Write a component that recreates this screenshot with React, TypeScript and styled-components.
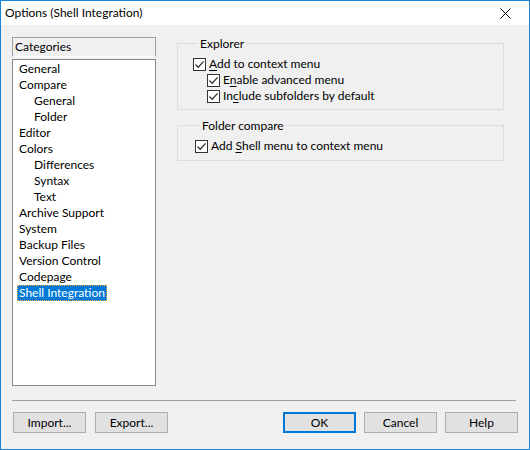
import React from "react";
import styled, { createGlobalStyle, css } from "styled-components";

const FONT = `Lato, "Noto Sans", sans-serif`;

const Global = createGlobalStyle`
  html, body { margin: 0; padding: 0; background: #ffffff; }
  body { font-family: ${FONT}; font-size: 12px; color: #000; }
  * { box-sizing: border-box; }
`;

const Window = styled.div`
  width: 530px;
  height: 450px;
  border: 1px solid #1883d7;
  display: flex;
  flex-direction: column;
  background: #f0f0f0;
`;

const TitleBar = styled.div`
  height: 24px;
  background: #ffffff;
  display: flex;
  align-items: center;
  justify-content: space-between;
  padding-left: 4px;
  flex: none;
`;

const Title = styled.span`
  font-size: 12px;
  line-height: 16px;
  color: #000;
`;

const CloseBox = styled.div`
  width: 46px;
  height: 24px;
  display: flex;
  align-items: center;
  justify-content: center;
  margin-right: 1px;
`;

const Body = styled.div`
  flex: 1;
  display: flex;
  flex-direction: column;
  padding: 12px 11px 16px 11px;
`;

const Main = styled.div`
  height: 349px;
  display: flex;
  flex: none;
`;

const LeftCol = styled.div`
  width: 144px;
  display: flex;
  flex-direction: column;
  gap: 2px;
`;

const ListHeader = styled.div`
  height: 20px;
  border: 1px solid #a0a0a0;
  border-bottom-color: #ffffff;
  background: #f0f0f0;
  padding-left: 2px;
  display: flex;
  align-items: center;
  line-height: 16px;
`;

const List = styled.div`
  flex: 1;
  border: 1px solid #828790;
  background: #ffffff;
  padding: 1px 0 0 4px;
  display: flex;
  flex-direction: column;
  align-items: flex-start;
`;

const Item = styled.div<{ $level: number; $selected?: boolean }>`
  height: 16px;
  line-height: 14px;
  padding: 0 1px;
  margin-left: ${(p) => (p.$level ? 15 : 0)}px;
  border: 1px solid transparent;
  white-space: nowrap;
  ${(p) =>
    p.$selected &&
    css`
      background: #0078d7;
      color: #ffffff;
      border: 1px dotted #f5b040;
    `}
`;

const RightCol = styled.div`
  flex: 1;
  margin-left: 21px;
  margin-right: 14px;
  margin-top: -1px;
  display: flex;
  flex-direction: column;
  gap: 8px;
`;

const Group = styled.fieldset<{ $padLeft: number; $padBottom: number }>`
  margin: 0;
  border: 1px solid #dcdcdc;
  padding: 5px 0 ${(p) => p.$padBottom}px ${(p) => p.$padLeft}px;
  min-width: 0;
`;

const Legend = styled.legend`
  margin-left: 5px;
  padding: 0 2px;
  line-height: 15px;
  font-size: 12px;
`;

const CheckRow = styled.label<{ $indent?: number }>`
  height: 16px;
  display: flex;
  align-items: center;
  gap: 3px;
  margin-left: ${(p) => p.$indent ?? 0}px;
  white-space: nowrap;
  line-height: 16px;
`;

const Box = styled.span`
  width: 13px;
  height: 13px;
  border: 1px solid #333333;
  background: #ffffff;
  display: flex;
  flex: none;
  align-items: center;
  justify-content: center;
`;

const Separator = styled.div`
  height: 1px;
  background: #a0a0a0;
  margin: 14px 2px 11px 0;
  flex: none;
`;

const ButtonRow = styled.div`
  display: flex;
  align-items: center;
  gap: 8px;
  padding-left: 1px;
`;

const Spacer = styled.div`
  flex: 1;
`;

const Button = styled.button<{ $default?: boolean; $gapLeft?: number }>`
  width: 73px;
  height: 21px;
  margin: 0;
  margin-left: ${(p) => p.$gapLeft ?? 0}px;
  padding: 0;
  background: #e1e1e1;
  border: 1px solid #adadad;
  font-family: ${FONT};
  font-size: 12px;
  line-height: 16px;
  color: #000;
  ${(p) =>
    p.$default &&
    css`
      border: 2px solid #0078d7;
    `}
`;

const U = styled.span`
  text-decoration: underline;
  text-underline-offset: 2px;
`;

const Check = () => (
  <Box>
    <svg width="11" height="11" viewBox="0 0 11 11">
      <path d="M1.5 5.5 L4.2 8.2 L9.6 2.4" fill="none" stroke="#333" strokeWidth="1.3" />
    </svg>
  </Box>
);

const categories: { label: string; level: number }[] = [
  { label: "General", level: 0 },
  { label: "Compare", level: 0 },
  { label: "General", level: 1 },
  { label: "Folder", level: 1 },
  { label: "Editor", level: 0 },
  { label: "Colors", level: 0 },
  { label: "Differences", level: 1 },
  { label: "Syntax", level: 1 },
  { label: "Text", level: 1 },
  { label: "Archive Support", level: 0 },
  { label: "System", level: 0 },
  { label: "Backup Files", level: 0 },
  { label: "Version Control", level: 0 },
  { label: "Codepage", level: 0 },
  { label: "Shell Integration", level: 0 },
];

export default function App() {
  return (
    <>
      <Global />
      <Window>
        <TitleBar>
          <Title>Options (Shell Integration)</Title>
          <CloseBox>
            <svg width="11" height="11" viewBox="0 0 11 11">
              <path d="M0.5 0.5 L10.5 10.5 M10.5 0.5 L0.5 10.5" stroke="#000" strokeWidth="1" />
            </svg>
          </CloseBox>
        </TitleBar>
        <Body>
          <Main>
            <LeftCol>
              <ListHeader>Categories</ListHeader>
              <List>
                {categories.map((c, i) => (
                  <Item key={i} $level={c.level} $selected={c.label === "Shell Integration"}>
                    {c.label}
                  </Item>
                ))}
              </List>
            </LeftCol>
            <RightCol>
              <Group $padLeft={15} $padBottom={5}>
                <Legend>Explorer</Legend>
                <CheckRow>
                  <Check />
                  <span>
                    <U>A</U>dd to context menu
                  </span>
                </CheckRow>
                <CheckRow $indent={14}>
                  <Check />
                  <span>
                    E<U>n</U>able advanced menu
                  </span>
                </CheckRow>
                <CheckRow $indent={14}>
                  <Check />
                  <span>
                    In<U>c</U>lude subfolders by default
                  </span>
                </CheckRow>
              </Group>
              <Group $padLeft={17} $padBottom={6}>
                <Legend>Folder compare</Legend>
                <CheckRow>
                  <Check />
                  <span>
                    Add <U>S</U>hell menu to context menu
                  </span>
                </CheckRow>
              </Group>
            </RightCol>
          </Main>
          <Separator />
          <ButtonRow>
            <Button>Import...</Button>
            <Button $gapLeft={1}>Export...</Button>
            <Spacer />
            <Button $default>OK</Button>
            <Button>Cancel</Button>
            <Button>Help</Button>
          </ButtonRow>
        </Body>
      </Window>
    </>
  );
}
